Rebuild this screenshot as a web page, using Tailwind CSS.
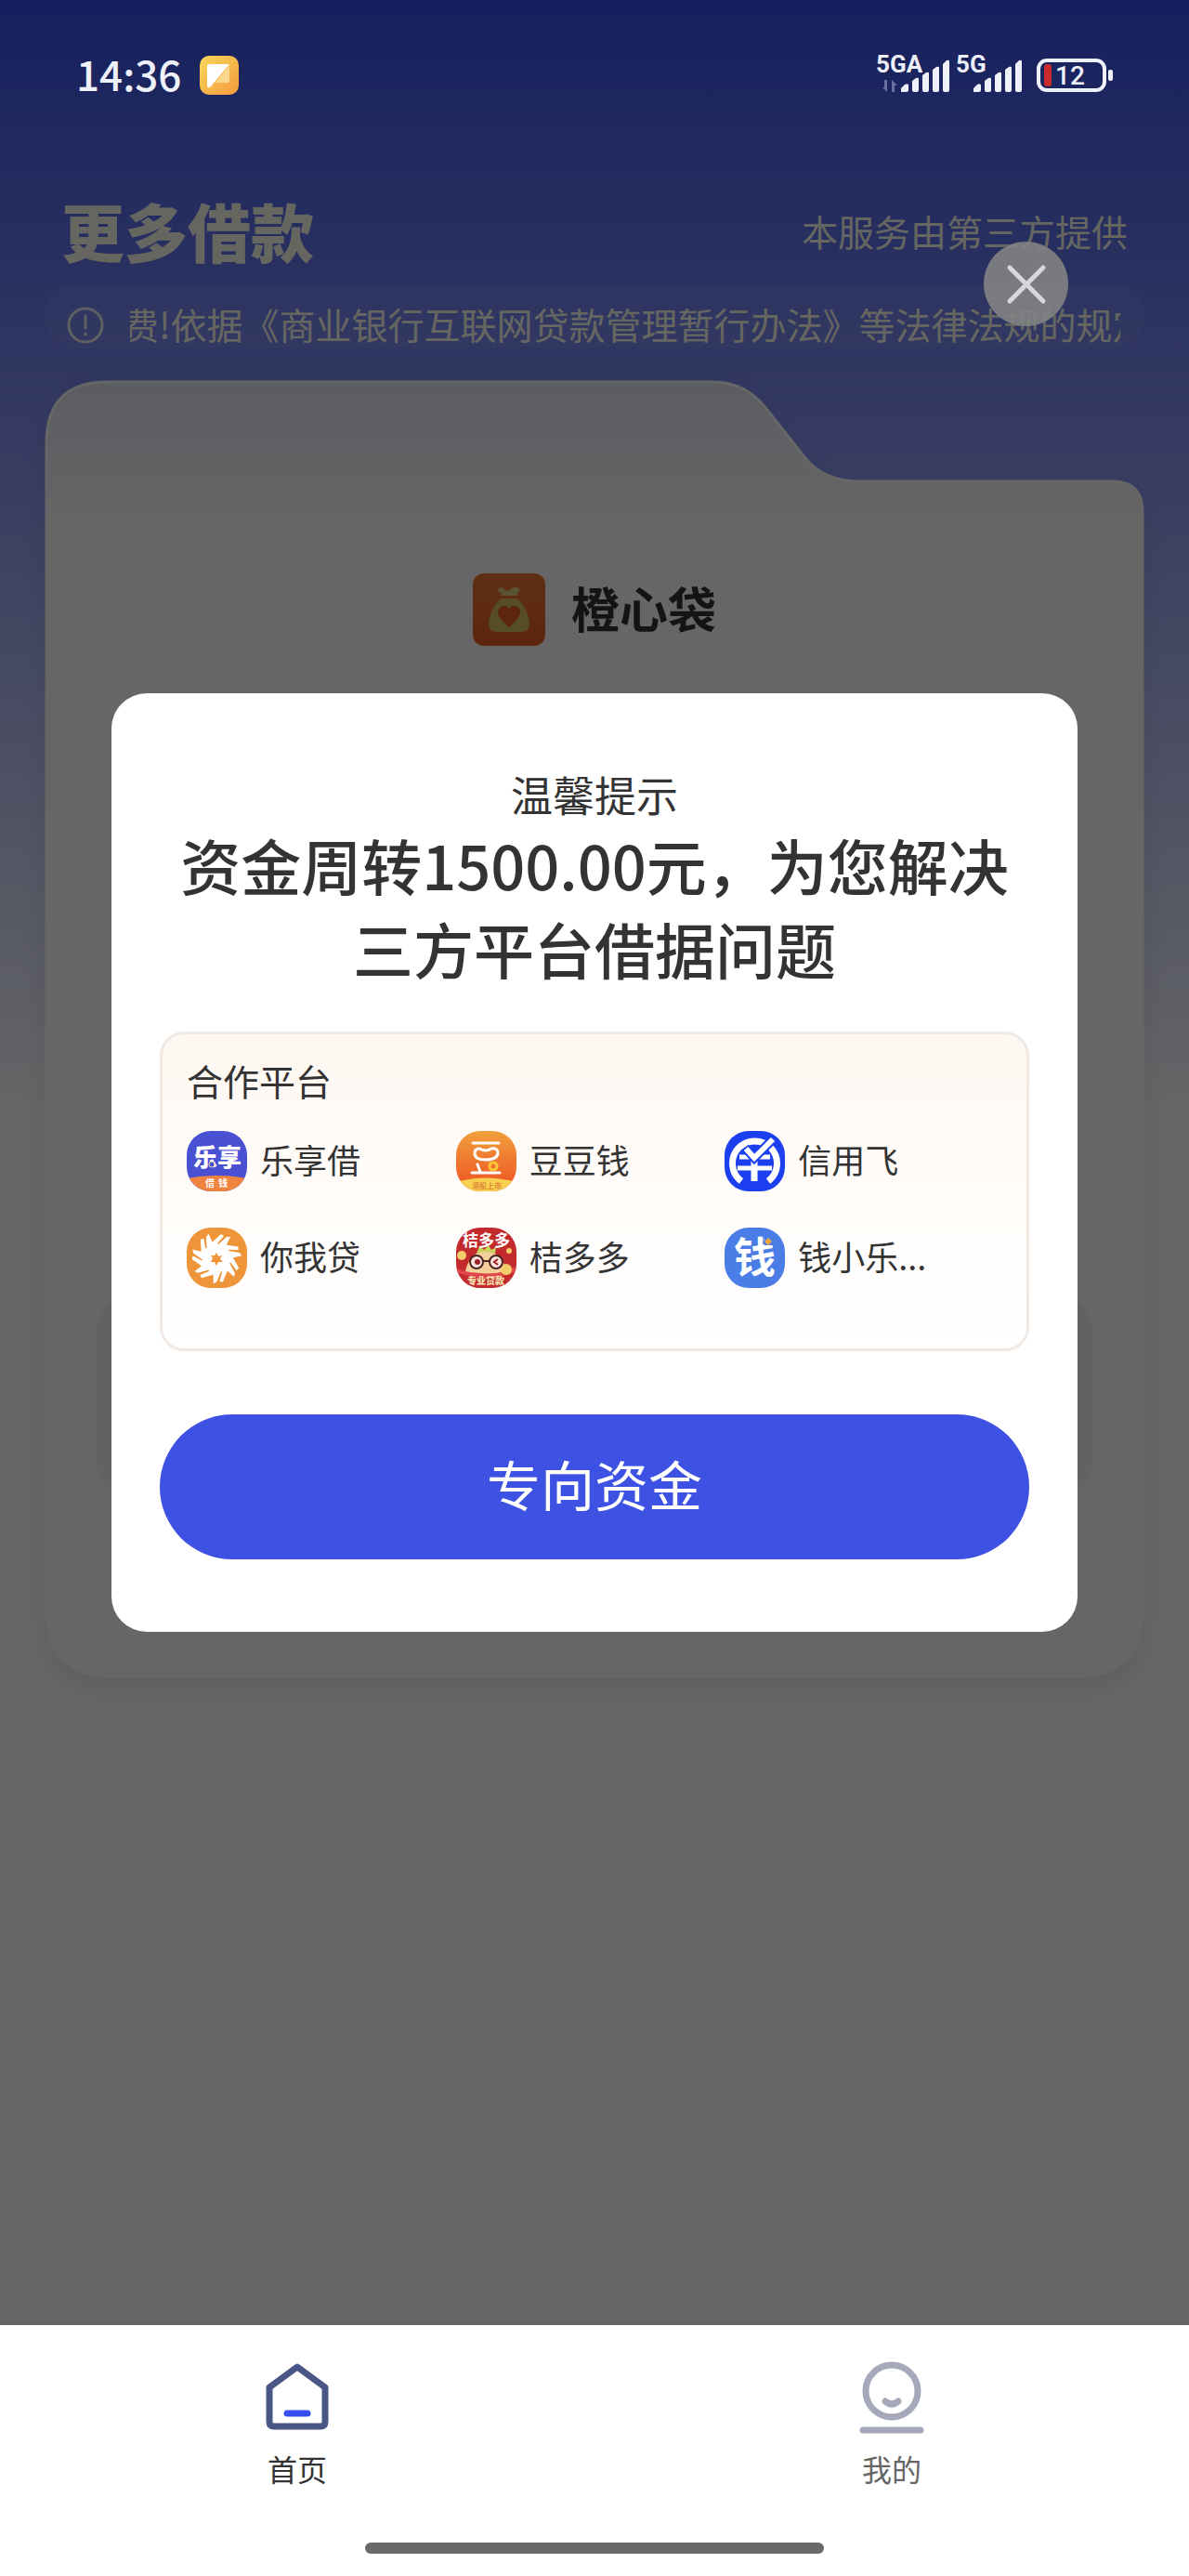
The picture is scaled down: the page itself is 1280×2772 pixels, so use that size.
<!DOCTYPE html>
<html lang="zh-CN">
<head>
  <meta charset="UTF-8" />
  <meta name="viewport" content="width=device-width, initial-scale=1.0"/>
  <title>更多借款</title>
  <script src="https://cdn.jsdelivr.net/npm/@tailwindcss/browser@4"></script>
</head>
<body class="min-h-screen flex flex-col bg-white text-[#333] font-['Noto_Sans_CJK_SC',sans-serif]">

  <main class="relative flex-1 flex flex-col bg-white bg-[linear-gradient(#3750eb,#ffffff_1200px)]">

    <!-- Status Bar -->
    <div class="relative z-20 h-[180px] pl-[82px] pr-20 flex items-start justify-between text-[#eef0fa]">
      <div class="mt-[60px] h-[42px] flex items-center gap-5">
        <span class="pb-1 text-[44px] leading-[42px] font-medium">14:36</span>
        <svg class="w-[42px] h-[42px]" viewBox="0 0 42 42">
          <defs>
            <linearGradient id="note" x1="0" y1="0" x2="1" y2="1">
              <stop offset="0" stop-color="#f7d75c"/><stop offset="1" stop-color="#f49a3c"/>
            </linearGradient>
          </defs>
          <rect width="42" height="42" rx="10" fill="url(#note)"/>
          <path d="M32 10v17q0 2-2 2H17z" fill="#fbd78e"/>
          <path d="M10 9h22L12 33q-4 3-4-1V11q0-2 2-2z" fill="#fff"/>
        </svg>
      </div>
      <svg class="mt-10 w-[270px] h-20 overflow-visible" viewBox="930 40 270 80" fill="#eef0fa" font-family="Roboto, sans-serif">
        <text x="943" y="78" font-size="26" font-weight="700">5GA</text>
        <path d="M955 86v13l-5-5h2v-8zM960 99V86l6 6h-3v7z" fill="#6a71a2"/>
        <path d="M970 99v-4l4-4q4-2 4 1v5q0 2-2 2h-4zM982 87l4-3q3-1 3 1v12q0 2-2 2h-3q-2 0-2-2zM993 81l4-3q3-1 3 1v18q0 2-2 2h-3q-2 0-2-2zM1004 75l4-3q3-1 3 1v24q0 2-2 2h-3q-2 0-2-2zM1015 69l4-4q3-1 3 1v31q0 2-2 2h-3q-2 0-2-2z"/>
        <text x="1029" y="78" font-size="26" font-weight="700">5G</text>
        <path d="M1048 99v-4l4-4q4-2 4 1v5q0 2-2 2h-4zM1060 87l4-3q3-1 3 1v12q0 2-2 2h-3q-2 0-2-2zM1071 81l4-3q3-1 3 1v18q0 2-2 2h-3q-2 0-2-2zM1082 75l4-3q3-1 3 1v24q0 2-2 2h-3q-2 0-2-2zM1093 69l4-4q3-1 3 1v31q0 2-2 2h-3q-2 0-2-2z"/>
        <rect x="1118" y="65" width="71" height="32" rx="9" fill="none" stroke="#eef0fa" stroke-width="4"/>
        <rect x="1124" y="69" width="8" height="24" rx="3" fill="#c92a2a"/>
        <rect x="1193" y="75" width="5" height="12" rx="2"/>
        <text x="1136" y="91" font-size="28" font-weight="500">12</text>
      </svg>
    </div>

    <!-- Page Header -->
    <header class="px-[66px] h-[126px] pt-[18px] flex items-start justify-between text-[#fffff2]">
      <h1 class="text-[68px] leading-[100px] font-black">更多借款</h1>
      <p class="text-[39px] leading-[100px]">本服务由第三方提供</p>
    </header>

    <!-- Notice -->
    <div class="mx-12 h-[68px] pl-6 pr-[26px] rounded-[32px] bg-white/5 flex items-center gap-7 text-[#fffff2]">
      <svg class="mt-5 w-10 h-10 shrink-0" viewBox="0 0 40 40" fill="none" stroke="#f0f1f4" stroke-width="3" stroke-linecap="round">
        <circle cx="20" cy="20" r="18"/><path d="M20 10v13M20 29v1"/>
      </svg>
      <div class="mt-4 flex-1 overflow-hidden whitespace-nowrap">
        <p class="-ml-2 text-[39px] leading-[52px]">费!依据《商业银行互联网贷款管理暂行办法》等法律法规的规定</p>
      </div>
    </div>

    <!-- Product Card -->
    <section class="relative mx-[49px] mt-9 h-[1395px] pt-[207px] flex flex-col items-center">
      <svg class="absolute inset-0 w-full h-full overflow-visible drop-shadow-[0_12px_12px_rgba(0,0,0,0.08)]" viewBox="0 0 1182 1395" preserveAspectRatio="none">
        <defs>
          <linearGradient id="card" gradientUnits="userSpaceOnUse" x1="0" y1="0" x2="0" y2="160">
            <stop offset="0" stop-color="#e4e7f5"/><stop offset="1" stop-color="#fff"/>
          </linearGradient>
        </defs>
        <path d="M1 67Q1 1 67 1H718Q754 1 776 30L818 83Q838 108 876 108H1149Q1181 108 1181 141V1322Q1181 1394 1109 1394H73Q1 1394 1 1322Z" fill="url(#card)" stroke="#fff" stroke-width="3"/>
      </svg>
      <div class="relative flex items-center gap-7">
        <svg class="w-[78px] h-[78px]" viewBox="0 0 78 78">
          <defs>
            <linearGradient id="bag" x1="0" y1="0" x2="0" y2="1">
              <stop offset="0" stop-color="#ec7830"/><stop offset="1" stop-color="#e85c24"/>
            </linearGradient>
          </defs>
          <rect width="78" height="78" rx="12" fill="url(#bag)"/>
          <path d="M27 18q3-5 7-1q4 4 8-1q6-3 8 1q2 1-1 3l-2 4H31l-1-4q-4 0-3-2z" fill="#e0cc80"/>
          <path d="M30 27h18q12 12 13 26q0 10-9 10H26q-9 0-9-10q1-14 13-26z" fill="#d6bf5c"/>
          <path d="M39 58Q27 48 27 42q1-7 7-7q4 0 5 4q1-4 5-4q7 0 7 7q0 6-12 16z" fill="#e85c24"/>
        </svg>
        <h2 class="pb-1 text-[52px] leading-[74px] font-bold">橙心袋</h2>
      </div>
      <div class="relative self-stretch mx-[55px] mt-[697px] h-[220px] rounded-[40px] bg-[#f6f6f6]"></div>
    </section>

    <!-- Modal -->
    <div class="absolute inset-0 z-10 bg-black/60 flex items-center justify-center px-[120px]">
      <button type="button" aria-label="关闭" class="absolute top-[260px] right-[130px] w-[91px] h-[91px] rounded-full bg-[#828384]/90 flex items-center justify-center">
        <svg class="w-12 h-12" viewBox="0 0 48 48" stroke="#d6d7d9" stroke-width="5" stroke-linecap="round">
          <path d="M6 6l36 36M42 6L6 42"/>
        </svg>
      </button>

      <div role="dialog" aria-modal="true" class="w-full bg-white rounded-[38px] px-[52px] pt-[79px] pb-[78px]">
        <p class="text-[45px] leading-[60px] text-center">温馨提示</p>
        <h2 class="text-[65px] leading-[90px] font-medium text-center">资金周转1500.00元，为您解决三方平台借据问题</h2>

        <div class="mt-[45px] h-[344px] border-[3px] border-[#f0e9e4] rounded-[26px] pl-[26px] pr-[35px] pt-5 bg-linear-to-b from-[#fef7f1] via-[#fffcf9] to-white">
          <h3 class="text-[39px] leading-[58px]">合作平台</h3>
          <ul class="mt-[26px] grid grid-cols-3 gap-y-[39px] text-[36px] leading-[61px] whitespace-nowrap">
            <li class="flex items-center gap-[14px]">
              <svg class="w-[65px] h-[65px] shrink-0 rounded-[26px]" viewBox="0 0 65 65" fill="#fff" font-family="Noto Sans CJK SC, sans-serif">
                <rect width="65" height="65" fill="#4a50d2"/>
                <path d="M0 51Q32 45 65 51V65H0z" fill="#ee8440"/>
                <text x="7" y="38" font-size="26" font-weight="900">乐享</text>
                <circle cx="27" cy="36" r="3" fill="#4a50d2" stroke="#e8d8b0" stroke-width="1"/>
                <text x="20" y="60" font-size="10" font-weight="700">借</text>
                <text x="34" y="60" font-size="10" font-weight="700">钱</text>
              </svg>
              <span class="pb-1">乐享借</span>
            </li>
            <li class="flex items-center gap-[14px]">
              <svg class="w-[65px] h-[65px] shrink-0 rounded-[26px]" viewBox="0 0 65 65" font-family="Noto Sans CJK SC, sans-serif">
                <defs>
                  <linearGradient id="bean" x1="0" y1="0" x2="0" y2="1">
                    <stop offset="0" stop-color="#f0a03c"/><stop offset="1" stop-color="#ef4f23"/>
                  </linearGradient>
                </defs>
                <rect width="65" height="65" fill="url(#bean)"/>
                <path d="M0 55Q32 46 65 55V65H0z" fill="#f8cf50"/>
                <g fill="none" stroke="#fff" stroke-width="3" stroke-linecap="round">
                  <path d="M18 13H46M17 45H47M23 36L26 44"/>
                  <path d="M25 19Q32 23 38 19Q45 18 45 24Q44 31 32 31Q20 31 20 24Q20 19 25 19Z"/>
                </g>
                <circle cx="40" cy="38" r="4" fill="none" stroke="#fbc734" stroke-width="3"/>
                <text x="17" y="62" font-size="8" font-weight="700" fill="#dc8a35">港股上市</text>
              </svg>
              <span class="pb-1">豆豆钱</span>
            </li>
            <li class="flex items-center gap-[14px]">
              <svg class="w-[65px] h-[65px] shrink-0 rounded-[26px]" viewBox="0 0 65 65" fill="none">
                <rect width="65" height="65" fill="#1c40f0"/>
                <path d="M18 54A24 24 0 1 1 47 54" stroke="#fff" stroke-width="7"/>
                <path d="M16 28H49M14 40H51" stroke="#fff" stroke-width="5"/>
                <path d="M32 29V54" stroke="#fff" stroke-width="7"/>
                <path d="M22 18L32 29L52 9" stroke="#1c40f0" stroke-width="10"/>
                <path d="M23 19L32 29L52 9" stroke="#fff" stroke-width="6"/>
              </svg>
              <span class="pb-1">信用飞</span>
            </li>
            <li class="flex items-center gap-[14px]">
              <svg class="w-[65px] h-[65px] shrink-0 rounded-[26px]" viewBox="0 0 65 65">
                <rect width="65" height="65" fill="#ee9439"/>
                <g fill="#fff">
                  <path id="petal" d="M29 32L27 16L37 7L40 9L33 17L34 18L43 10H47L37 30z"/>
                  <use href="#petal" transform="rotate(51 32 33)"/>
                  <use href="#petal" transform="rotate(103 32 33)"/>
                  <use href="#petal" transform="rotate(154 32 33)"/>
                  <use href="#petal" transform="rotate(206 32 33)"/>
                  <use href="#petal" transform="rotate(257 32 33)"/>
                  <use href="#petal" transform="rotate(309 32 33)"/>
                </g>
                <path d="M32 27l2 4 4-1-2 4 3 3-5 0-2 4-2-4-4 0 2-4-2-3 4 0z" fill="#ee9439"/>
              </svg>
              <span class="pb-1">你我贷</span>
            </li>
            <li class="flex items-center gap-[14px]">
              <svg class="w-[65px] h-[65px] shrink-0 rounded-[26px]" viewBox="0 0 65 65" font-family="Noto Sans CJK SC, sans-serif">
                <rect width="65" height="65" fill="#c22a2e"/>
                <path d="M0 44Q32 56 65 42V48Q32 60 0 48z" fill="#e0464a"/>
                <path d="M10 47Q14 28 30 25Q50 26 54 47Q32 52 10 47z" fill="#f4cf9a"/>
                <path d="M22 28L25 20L30 24L35 19L38 24L43 21L42 28Q32 24 22 28z" fill="#c9d45a"/>
                <text x="7" y="20" font-size="17" font-weight="700" fill="#fff">桔多多</text>
                <circle cx="6" cy="30" r="5" fill="#f5ce6c"/>
                <circle cx="54" cy="45" r="6" fill="#f5ce6c"/>
                <circle cx="57" cy="25" r="3" fill="#f5ce6c"/>
                <g fill="#fbe3dd" stroke="#4a2420" stroke-width="2">
                  <circle cx="22" cy="37" r="7"/><circle cx="43" cy="37" r="7"/>
                  <path d="M29 36H36"/>
                </g>
                <path d="M45 34L41 37L45 40" fill="none" stroke="#a02028" stroke-width="2"/>
                <circle cx="23" cy="37" r="3" fill="#a02028"/>
                <text x="12" y="61" font-size="10" font-weight="900" fill="#fbe3b0">专业贷款</text>
              </svg>
              <span class="pb-1">桔多多</span>
            </li>
            <li class="flex items-center gap-[14px]">
              <svg class="w-[65px] h-[65px] shrink-0 rounded-[26px]" viewBox="0 0 65 65" font-family="Noto Sans CJK SC, sans-serif">
                <rect width="65" height="65" fill="#4b7de6"/>
                <text x="10" y="49" font-size="45" font-weight="700" fill="#fff">钱</text>
                <path d="M43 10H53V19H43z" fill="#4b7de6"/>
                <path d="M47 11l4 4-4 4-4-4z" fill="#f0a43c"/>
              </svg>
              <span class="pb-1">钱小乐...</span>
            </li>
          </ul>
        </div>

        <button type="button" class="mt-[68px] pb-2 w-full h-[156px] rounded-full bg-[#3d52e3] text-white text-[58px] leading-[148px]">专向资金</button>
      </div>
    </div>
  </main>

  <!-- Tab Bar -->
  <nav class="h-[270px] pb-6 bg-white flex flex-col justify-between items-center text-[32px] leading-[48px]">
    <div class="w-full grid grid-cols-2">
      <a href="#" class="pt-[38px] flex flex-col items-center gap-3">
        <svg class="w-20 h-20" viewBox="0 0 80 80" fill="none" stroke-linejoin="round" stroke-linecap="round">
          <path d="M40 7L70 29V66Q70 71 65 71H15Q10 71 10 66V29Z" stroke="#4a5686" stroke-width="7"/>
          <path d="M29 57H51" stroke="#3450ee" stroke-width="7"/>
        </svg>
        <span>首页</span>
      </a>
      <a href="#" class="pt-[38px] flex flex-col items-center gap-3 text-[#666]">
        <svg class="w-20 h-20" viewBox="0 0 80 80" fill="none" stroke="#a5a9bb" stroke-width="7" stroke-linecap="round">
          <circle cx="40" cy="33" r="28"/>
          <path d="M33 44Q40 50 47 44"/>
          <path d="M9 75H71"/>
        </svg>
        <span>我的</span>
      </a>
    </div>
    <div class="w-[494px] h-3 rounded-full bg-[#696969]"></div>
  </nav>

</body>
</html>
